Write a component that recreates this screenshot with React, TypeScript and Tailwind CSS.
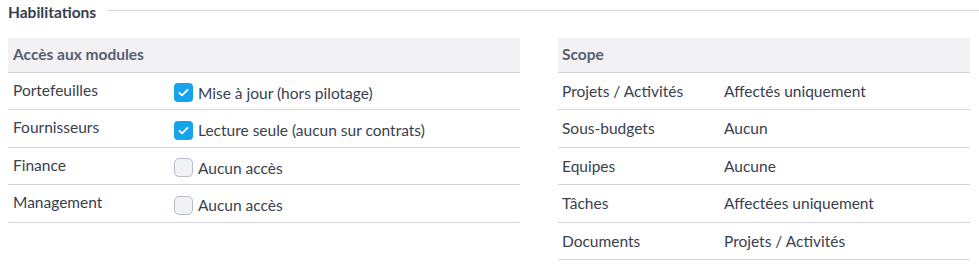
const font = { fontFamily: "Lato, 'Liberation Sans', sans-serif" };

function Check({ checked }: { checked: boolean }) {
  return checked ? (
    <span className="flex h-[19px] w-[19px] shrink-0 items-center justify-center rounded-[4px] bg-[#17a4ee]">
      <svg width="13" height="13" viewBox="0 0 16 16" fill="none">
        <path d="M3 8.5l3.2 3L13 4.8" stroke="white" strokeWidth="2.4" strokeLinecap="round" strokeLinejoin="round" />
      </svg>
    </span>
  ) : (
    <span className="h-[19px] w-[19px] shrink-0 rounded-[5px] border border-[#b9bdc9] bg-[#f1f2f6]" />
  );
}

const modules = [
  { label: "Portefeuilles", value: "Mise à jour (hors pilotage)", checked: true, h: "h-[37px]" },
  { label: "Fournisseurs", value: "Lecture seule (aucun sur contrats)", checked: true, h: "h-[38px]" },
  { label: "Finance", value: "Aucun accès", checked: false, h: "h-[37px]" },
  { label: "Management", value: "Aucun accès", checked: false, h: "h-[38px]" },
];

const scope = [
  { label: "Projets / Activités", value: "Affectés uniquement", h: "h-[37px]" },
  { label: "Sous-budgets", value: "Aucun", h: "h-[38px]" },
  { label: "Equipes", value: "Aucune", h: "h-[37px]" },
  { label: "Tâches", value: "Affectées uniquement", h: "h-[38px]" },
  { label: "Documents", value: "Projets / Activités", h: "h-[37px]" },
];

export default function App() {
  return (
    <div className="h-[269px] w-[979px] bg-white text-[15.5px] text-[#394050]" style={font}>
      <div className="flex items-center gap-[12px] pl-2 pt-[2px]">
        <span className="text-[15.5px] font-bold leading-[20px] text-[#363e4f]">Habilitations</span>
        <div className="mt-[-4px] h-px flex-1 bg-[#d2d1df]" />
      </div>

      <div className="mt-[16px] flex pl-2">
        <div className="w-[512px]">
          <div className="flex h-[35px] items-center border-b border-[#d4d4dc] bg-[#f2f2f4] pl-[5px] font-bold text-[#565e6e]">
            Accès aux modules
          </div>
          {modules.map((m) => (
            <div key={m.label} className={`flex border-b border-[#d4d4dc] ${m.h}`}>
              <div className="w-[166px] pl-[5px] pt-[7px] leading-[20px]">{m.label}</div>
              <div className="flex items-center gap-[5px] pt-[3px] leading-[20px]">
                <Check checked={m.checked} />
                <span>{m.value}</span>
              </div>
            </div>
          ))}
        </div>

        <div className="ml-[38px] w-[412px]">
          <div className="flex h-[35px] items-center border-b border-[#d4d4dc] bg-[#f2f2f4] pl-[4px] font-bold text-[#565e6e]">
            Scope
          </div>
          {scope.map((s) => (
            <div key={s.label} className={`flex items-center border-b border-[#d4d4dc] pb-[1px] leading-[20px] ${s.h}`}>
              <div className="w-[166px] pl-[4px]">{s.label}</div>
              <div>{s.value}</div>
            </div>
          ))}
        </div>
      </div>
    </div>
  );
}
